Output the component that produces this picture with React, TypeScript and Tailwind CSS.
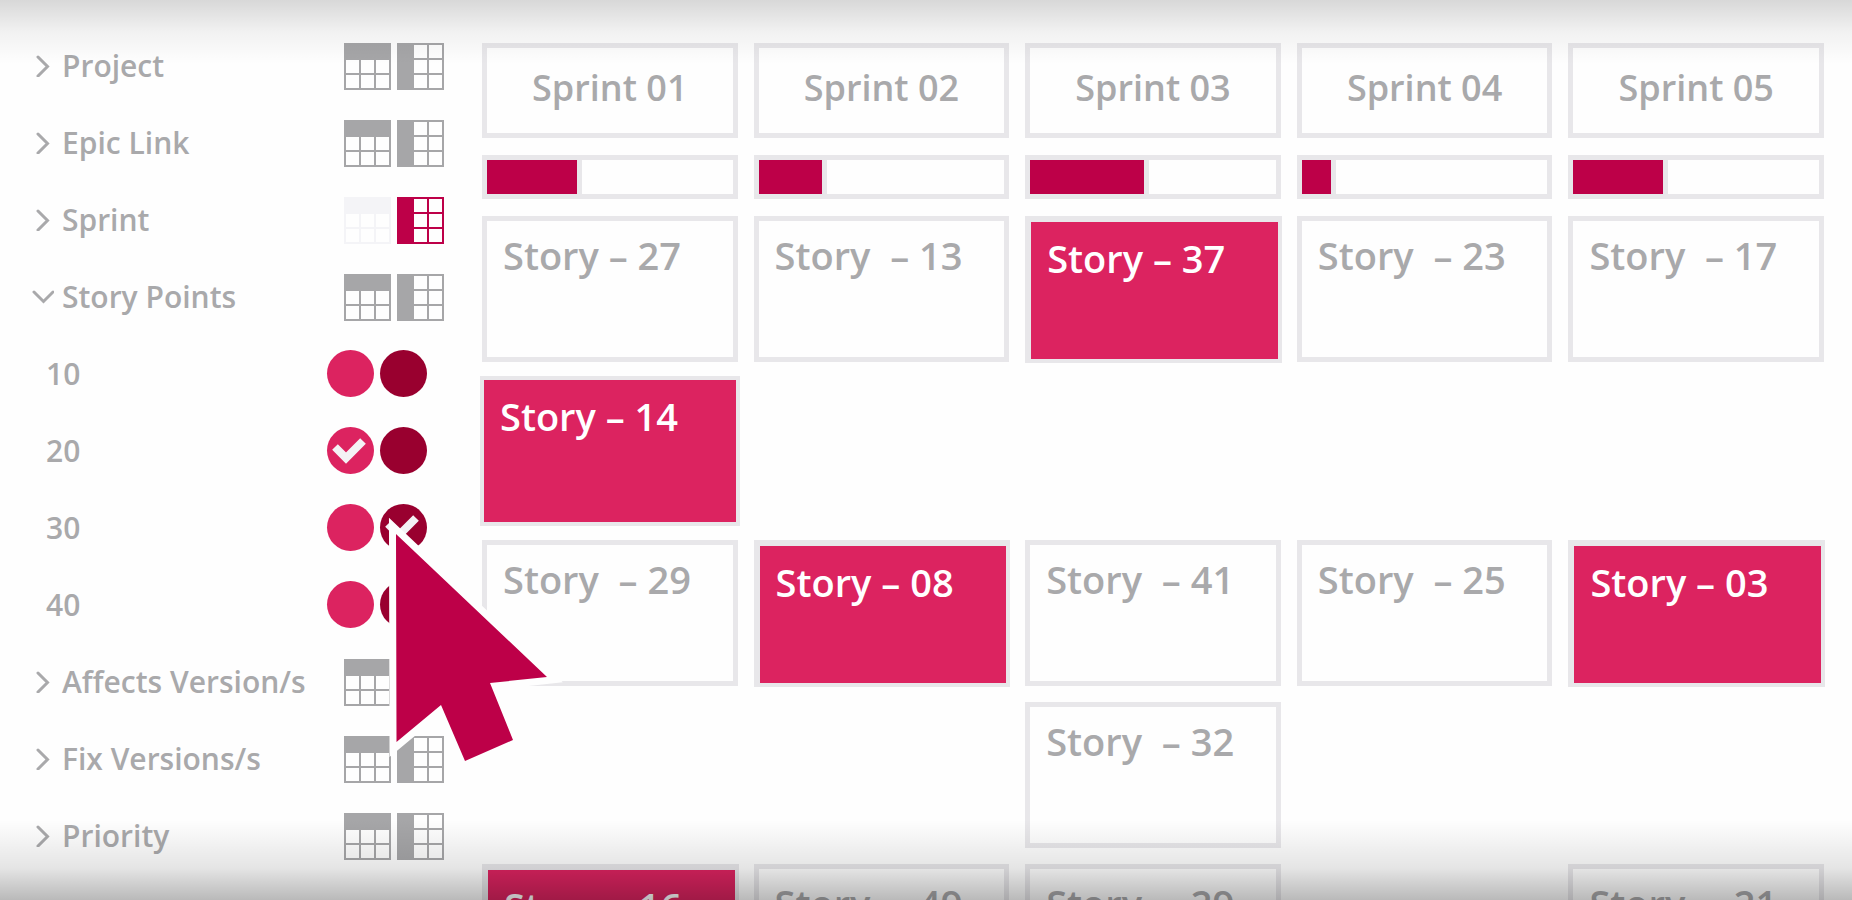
import React from "react";

type Toggle = "default" | "active" | "faded";
type CardState = "plain" | "selected" | "lifted";

const fields: { name: string; open?: boolean; rows?: Toggle; cols?: Toggle }[] = [
  { name: "Project" },
  { name: "Epic Link" },
  { name: "Sprint", rows: "faded", cols: "active" },
  { name: "Story Points", open: true },
  { name: "Affects Version/s" },
  { name: "Fix Versions/s" },
  { name: "Priority" },
];

const points = [
  { value: "10", pink: false, maroon: false },
  { value: "20", pink: true, maroon: false },
  { value: "30", pink: false, maroon: true },
  { value: "40", pink: false, maroon: false },
];

const sprints = [
  { name: "Sprint 01", progress: 38.5 },
  { name: "Sprint 02", progress: 28 },
  { name: "Sprint 03", progress: 48.5 },
  { name: "Sprint 04", progress: 14 },
  { name: "Sprint 05", progress: 38.5 },
];

const stories: ({ title: string; state?: CardState } | null)[] = [
  { title: "Story – 27" },
  { title: "Story  – 13" },
  { title: "Story – 37", state: "selected" },
  { title: "Story  – 23" },
  { title: "Story  – 17" },
  { title: "Story – 14", state: "lifted" },
  null,
  null,
  null,
  null,
  { title: "Story  – 29" },
  { title: "Story – 08", state: "selected" },
  { title: "Story  – 41" },
  { title: "Story  – 25" },
  { title: "Story – 03", state: "selected" },
  null,
  null,
  { title: "Story  – 32" },
  null,
  null,
  { title: "Story – 16", state: "selected" },
  { title: "Story  – 49" },
  { title: "Story  – 29" },
  null,
  { title: "Story  – 21" },
];

const toggleColor: Record<Toggle, string> = {
  default: "text-[#a6a6a8]",
  active: "text-[#bd0048]",
  faded: "text-[#f4f4f7]",
};

const cardStyle: Record<CardState, string> = {
  plain: "border-5 bg-[#fefefe] pt-2 pl-4",
  selected: "-mr-px -mb-px border-t-6 border-r-4 border-b-4 border-l-6 bg-[#dc2360] pt-2.5 pl-4 text-white",
  lifted: "-m-0.5 border-4 bg-[#dc2360] pt-2.5 pl-4 text-white",
};

const RowsIcon = () => (
  <svg viewBox="0 0 47 47" className="size-[47px]" fill="none" stroke="currentColor" strokeWidth="2">
    <path d="M0 0H47V17H0Z" fill="currentColor" stroke="none" />
    <path d="M1 1H46V46H1ZM16 17V46M31 17V46M1 31H46" />
  </svg>
);

const ColumnsIcon = () => (
  <svg viewBox="0 0 47 47" className="size-[47px]" fill="none" stroke="currentColor" strokeWidth="2">
    <path d="M0 0H17V47H0Z" fill="currentColor" stroke="none" />
    <path d="M1 1H46V46H1ZM31 1V46M17 16H46M17 31H46" />
  </svg>
);

const Chevron = ({ open }: { open?: boolean }) => (
  <svg viewBox="0 0 22 22" className="size-[22px]" fill="none" stroke="currentColor" strokeWidth="3">
    <path d={open ? "M2 6L11.5 15.5L21 6" : "M6 2L15.5 11.5L6 21"} strokeLinecap="round" />
  </svg>
);

const FieldRow = ({ name, open, rows = "default", cols = "default" }: (typeof fields)[number]) => (
  <div className="flex h-[47px] items-center justify-between">
    <button className="flex items-center gap-2 pb-0.5" aria-expanded={!!open}>
      <Chevron open={open} />
      {name}
    </button>
    <div className="flex gap-1.5">
      <button aria-label={`Show ${name} as rows`} className={toggleColor[rows]}>
        <RowsIcon />
      </button>
      <button aria-label={`Show ${name} as columns`} className={toggleColor[cols]}>
        <ColumnsIcon />
      </button>
    </div>
  </div>
);

const Dot = ({ label, color, checked }: { label: string; color: string; checked: boolean }) => (
  <span className="grid size-[47px] place-items-center">
    <input
      type="checkbox"
      aria-label={label}
      defaultChecked={checked}
      className={`peer col-start-1 row-start-1 size-[47px] appearance-none rounded-full ${color}`}
    />
    <svg
      viewBox="0 0 47 47"
      className="pointer-events-none invisible col-start-1 row-start-1 size-[47px] peer-checked:visible"
    >
      <path d="M8 20L19 31L36 14" fill="none" stroke="#f4f2f5" strokeWidth="8" />
    </svg>
  </span>
);

const Sidebar = () => (
  <aside className="flex w-[444px] shrink-0 flex-col gap-[30px] pt-[43px] pl-8 text-[30px] leading-[47px] font-semibold text-[#a9a9ab]">
    {fields.map((field) => (
      <React.Fragment key={field.name}>
        <FieldRow {...field} />
        {field.open &&
          points.map((point) => (
            <div key={point.value} className="flex h-[47px] items-center justify-between pr-[17px] pb-0.5 pl-3.5">
              <span>{point.value}</span>
              <div className="flex gap-1.5">
                <Dot label={`${point.value} pink`} color="bg-[#dc2360]" checked={point.pink} />
                <Dot label={`${point.value} maroon`} color="bg-[#99002f]" checked={point.maroon} />
              </div>
            </div>
          ))}
      </React.Fragment>
    ))}
  </aside>
);

const StoryCard = ({ title, state = "plain" }: { title: string; state?: CardState }) => (
  <article className={`border-[#e8e7ea] whitespace-pre ${cardStyle[state]}`}>{title}</article>
);

const Board = () => (
  <main className="min-w-0 flex-1 pt-[43px] pr-7 pl-[38px] text-[38px] leading-[52px] font-semibold text-[#a9a9ab]">
    <div className="grid grid-cols-5 gap-x-4 gap-y-[17px]">
      {sprints.map((sprint) => (
        <h2
          key={sprint.name}
          className="flex h-[95px] items-center justify-center border-5 border-[#e8e7ea] bg-[#fefefe] pb-1.5 text-[36px]"
        >
          {sprint.name}
        </h2>
      ))}
      {sprints.map((sprint) => (
        <div
          key={sprint.name}
          role="progressbar"
          aria-label={sprint.name}
          aria-valuenow={sprint.progress}
          className="h-11 border-5 border-[#e8e7ea] bg-[#fefefe]"
        >
          <div className="h-full border-r-5 border-[#e8e7ea] bg-[#bd0048]" style={{ width: `${sprint.progress}%` }} />
        </div>
      ))}
    </div>
    <div className="mt-[17px] grid auto-rows-[146px] grid-cols-5 gap-4">
      {stories.map((story, i) => (story ? <StoryCard key={i} {...story} /> : <div key={i} />))}
    </div>
  </main>
);

const Pointer = () => (
  <svg
    viewBox="0 0 200 260"
    className="pointer-events-none absolute top-[510px] left-[380px] h-[260px] w-[200px]"
    aria-hidden="true"
  >
    <path
      d="M16 24L167 167L110 173L133 230L85 251L61 195L16.500 232Z"
      fill="#bd0048"
      stroke="#fefefe"
      strokeWidth="14"
      paintOrder="stroke"
    />
  </svg>
);

const App = () => {
  return (
    <div className="relative flex h-screen overflow-hidden bg-[#fefefe] font-['Open_Sans','Noto_Sans',sans-serif]">
      <Sidebar />
      <Board />
      <Pointer />
      <div className="pointer-events-none absolute inset-x-0 top-0 h-16 bg-linear-to-b from-black/15 via-black/5 to-transparent" />
      <div className="pointer-events-none absolute inset-x-0 bottom-0 h-20 bg-linear-to-t from-black/27 via-black/10 via-40% to-transparent" />
    </div>
  );
};

export default App;
